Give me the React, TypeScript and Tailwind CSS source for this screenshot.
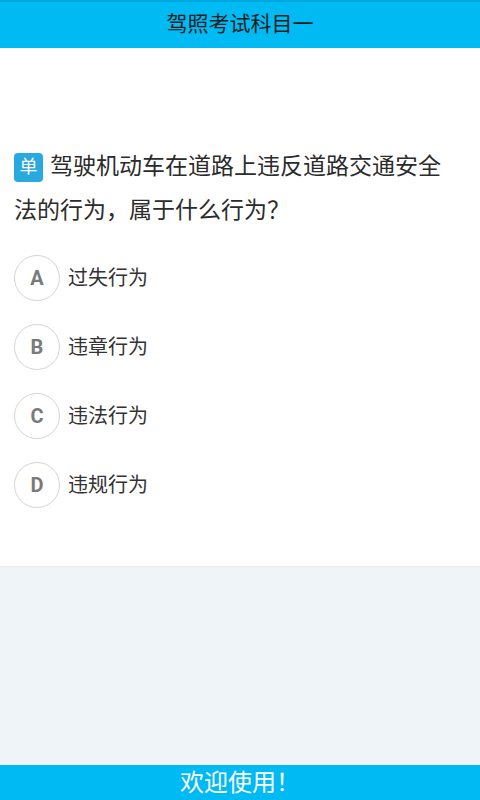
const OPTIONS: { key: string; text: string }[] = [
  { key: 'A', text: '过失行为' },
  { key: 'B', text: '违章行为' },
  { key: 'C', text: '违法行为' },
  { key: 'D', text: '违规行为' },
]

const FONT = "font-['Roboto','Noto_Sans_CJK_SC',sans-serif]"

function OptionRow({ letter, text }: { letter: string; text: string }) {
  return (
    <div className="flex items-center h-[69px]">
      <div className="w-[46px] h-[46px] rounded-full border border-[#d4d4d4] flex items-center justify-center text-[20px] font-bold text-[#7a7a7a]">
        {letter}
      </div>
      <span className="ml-[8px] text-[20px] text-[#333]">{text}</span>
    </div>
  )
}

export default function App() {
  return (
    <div className={`h-screen flex flex-col bg-white ${FONT}`}>
      <header className="h-[48px] shrink-0 bg-[#00baf4] border-t-2 border-[#00a8df] flex items-center justify-center">
        <h1 className="text-[21px] text-[#1c1c1c]">驾照考试科目一</h1>
      </header>

      <main className="h-[519px] shrink-0 pl-[14px] pr-[30px] pt-[97px] border-b border-[#ececec]">
        <div className="flex items-center h-[44px]">
          <span className="shrink-0 flex items-center justify-center w-[29px] h-[29px] rounded-[4px] bg-[#2aa8e0] text-white text-[18px] leading-none mr-[7px]">
            单
          </span>
          <span className="text-[23px] leading-[44px] text-[#2b2b2b] whitespace-nowrap">
            驾驶机动车在道路上违反道路交通安全
          </span>
        </div>
        <p className="text-[23px] leading-[44px] text-[#2b2b2b]">法的行为，属于什么行为？</p>
        <div className="mt-[10px]">
          {OPTIONS.map((o) => (
            <OptionRow key={o.key} letter={o.key} text={o.text} />
          ))}
        </div>
      </main>

      <section className="flex-1 bg-[#eff4f9]" />

      <footer className="h-[35px] shrink-0 bg-[#00baf4] flex items-center justify-center">
        <span className="text-[24px] leading-none text-white">欢迎使用！</span>
      </footer>
    </div>
  )
}
